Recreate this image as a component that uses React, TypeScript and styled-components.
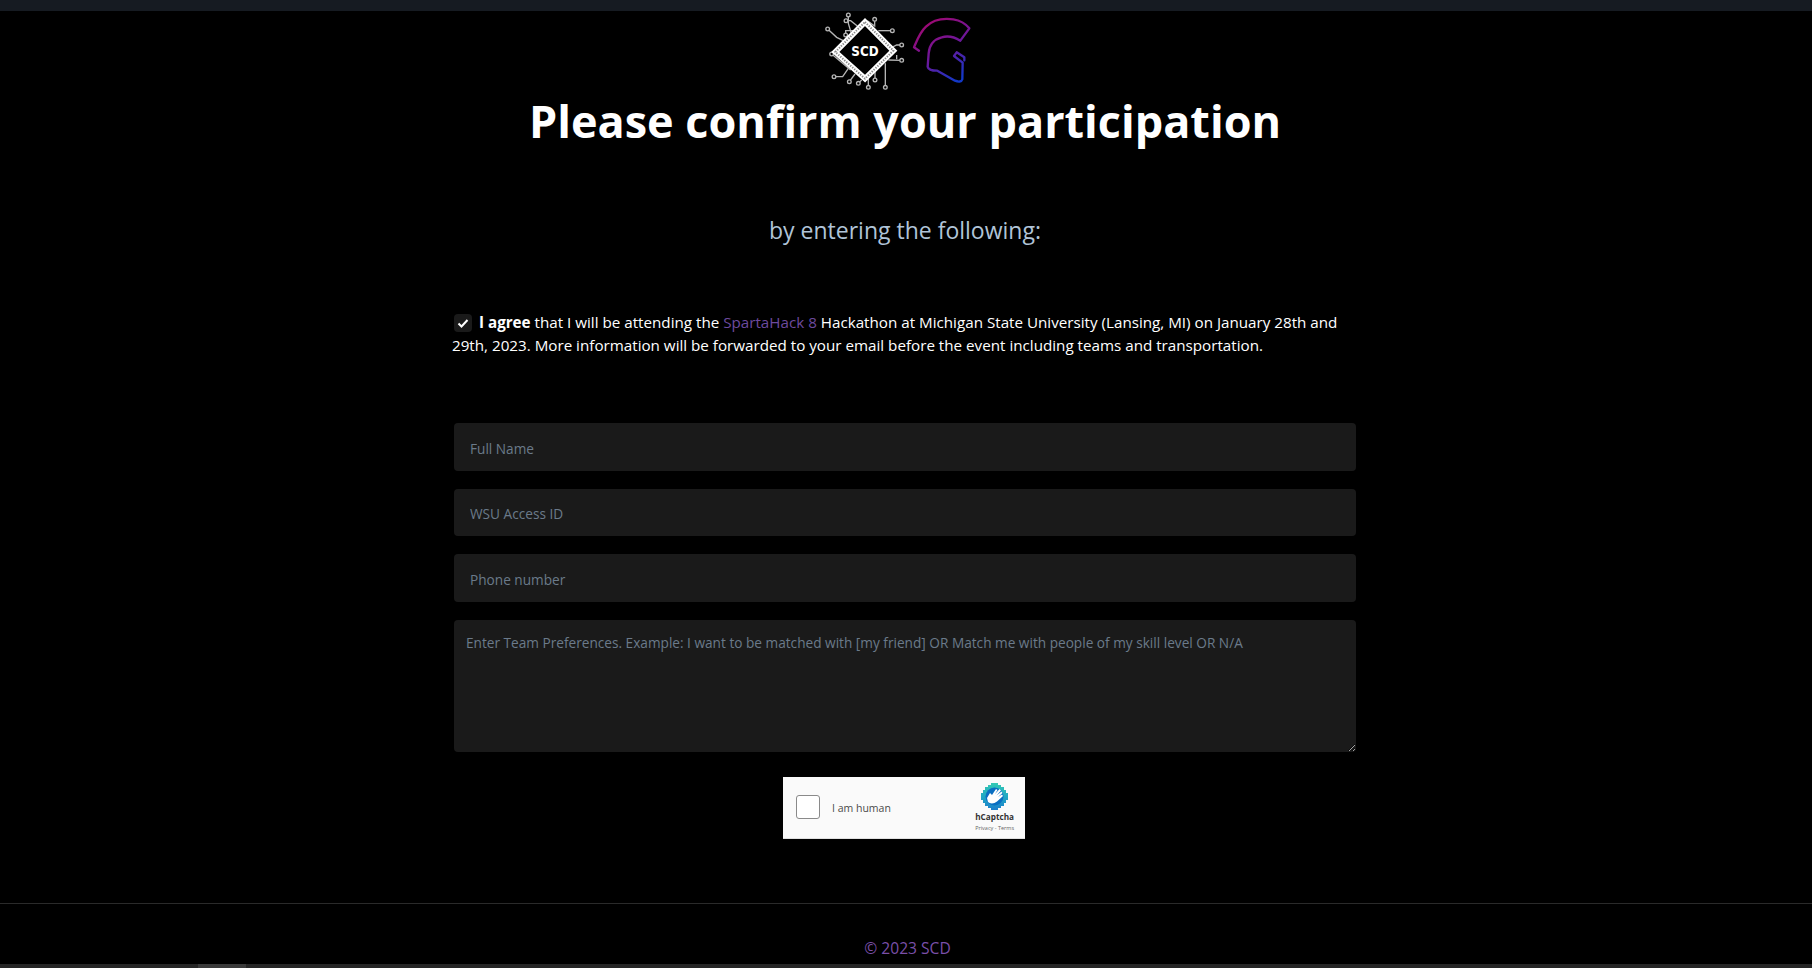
import React from 'react';
import styled, { createGlobalStyle } from 'styled-components';

const GlobalStyle = createGlobalStyle`
  html, body {
    margin: 0;
    padding: 0;
    background: #000;
    overflow: hidden;
  }
  * { box-sizing: border-box; }
`;

const Page = styled.div`
  height: 968px;
  display: flex;
  flex-flow: column;
  background: #000;
  color: #fff;
  font-family: "Open Sans", "Noto Sans", "Liberation Sans", sans-serif;
`;

const TopBar = styled.div`
  height: 11px;
  flex: none;
  background: #161b22;
`;

const Main = styled.main`
  flex: 1;
  padding-right: 2px;
  display: flex;
  flex-flow: column;
  align-items: center;
`;

const LogoRow = styled.div`
  height: 80px;
  margin-left: 2px;
  display: flex;
  justify-content: center;
`;

const Title = styled.h1`
  margin: 0;
  font-size: 45px;
  line-height: 60px;
  font-weight: 700;
  text-align: center;
`;

const Subtitle = styled.h2`
  margin: 63px 0 0;
  font-size: 23px;
  line-height: 32px;
  font-weight: 400;
  color: #b0c4d8;
  text-align: center;
`;

const Agreement = styled.p`
  width: 906px;
  margin: 65px 0 0;
  font-size: 15.2px;
  line-height: 23px;
`;

const AgreeBox = styled.span`
  display: inline-flex;
  align-items: center;
  justify-content: center;
  width: 18px;
  height: 18px;
  margin: 0 7px 0 2px;
  vertical-align: -1px;
  border-radius: 4px;
  background: #1a1a1a;
`;

const Highlight = styled.span`
  color: #6d4a9e;
`;

const Form = styled.form`
  width: 902px;
  margin-top: 66px;
  display: flex;
  flex-flow: column;
  gap: 18px;
`;

const Input = styled.input`
  height: 47.6px;
  padding: 3px 16px 0;
  border: none;
  border-radius: 4px;
  outline: none;
  background: #1a1a1a;
  color: #fff;
  font: 400 13.65px "Open Sans", "Noto Sans", sans-serif;

  &::placeholder {
    color: #6b7a8a;
    opacity: 1;
  }
`;

const TextArea = styled.textarea`
  height: 132px;
  padding: 13px 12px;
  border: none;
  border-radius: 4px;
  outline: none;
  resize: vertical;
  background: #1a1a1a;
  color: #fff;
  font: 400 13.65px "Open Sans", "Noto Sans", sans-serif;

  &::placeholder {
    color: #6b7a8a;
    opacity: 1;
  }
`;

const Captcha = styled.div`
  width: 242px;
  height: 62px;
  margin: 25px 2px 0 0;
  padding: 0 11px 0 13px;
  display: flex;
  align-items: center;
  background: #fafafa;
  border-bottom: 1px solid #e0e0e0;
`;

const CaptchaCheck = styled.div`
  width: 24px;
  height: 24px;
  flex: none;
  background: #fff;
  border: 1px solid #8a8a8a;
  border-radius: 3px;
`;

const CaptchaLabel = styled.span`
  margin: 1px 0 0 12px;
  flex: 1;
  color: #4a4a4a;
  font-size: 10.5px;
`;

const CaptchaBrand = styled.div`
  display: flex;
  flex-flow: column;
  align-items: center;
`;

const BrandName = styled.span`
  margin-top: 1px;
  color: #333;
  font-size: 8.2px;
  line-height: 11px;
  font-weight: 700;
`;

const BrandLinks = styled.span`
  margin-top: 2px;
  color: #666;
  font-size: 5.5px;
  line-height: 8px;
`;

const Footer = styled.footer`
  height: 61px;
  flex: none;
  padding: 33px 0 0 3px;
  border-top: 1px solid #2a2a2a;
  color: #7a4fa8;
  font-size: 15.6px;
  line-height: 22px;
  text-align: center;
`;

const ScrollTrack = styled.div`
  height: 4px;
  flex: none;
  background: #262626;
`;

const ScrollThumb = styled.div`
  width: 48px;
  height: 100%;
  margin-left: 198px;
  background: #3a3a3a;
`;

const CIRCUIT = [
  'M214 100 L205 70 L205 46',
  'M232 78 L212 62 L198 62',
  'M226 92 L197 92 L197 105',
  'M196 125 L170 112 L143 87',
  'M262 62 L284 78 L284 58',
  'M295 92 L337 92',
  'M330 145 L350 135 L365 135',
  'M325 180 L365 181',
  'M350 165 L350 178',
  'M316 190 L316 262',
  'M285 215 L285 240',
  'M265 235 L265 262',
  'M245 240 L235 250',
  'M225 222 L208 245',
  'M205 205 L188 230 L162 230',
  'M155 162 L212 210',
];

const PADS: [number, number][] = [
  [205, 45], [198, 62], [143, 87], [284, 58], [337, 92], [365, 135],
  [365, 181], [316, 262], [285, 240], [265, 262], [235, 250], [208, 245],
  [162, 230], [155, 162], [197, 105],
];

const Logos: React.FC = () => (
  <svg width="172" height="80" viewBox="120 33 516 240" fill="none">
    <defs>
      <linearGradient id="helmet" x1="0.2" y1="0" x2="0.75" y2="1">
        <stop offset="0" stopColor="#a3086f" />
        <stop offset="0.55" stopColor="#6a189c" />
        <stop offset="1" stopColor="#1238c8" />
      </linearGradient>
    </defs>
    <g stroke="#b5b5b5" strokeWidth="4">
      {CIRCUIT.map((d) => <path key={d} d={d} />)}
      {PADS.map(([cx, cy]) => <circle key={`${cx}-${cy}`} cx={cx} cy={cy} r="5.5" fill="#000" />)}
    </g>
    <path d="M255 66 L340 152 L255 236 L166 156 Z" fill="#000" stroke="#fff" strokeWidth="17" strokeLinejoin="miter" />
    <path d="M255 66 L340 152 L255 236 L166 156 Z" stroke="#8a8a8a" strokeWidth="6" strokeDasharray="4 4" />
    <text
      x="255"
      y="168"
      fill="#fff"
      fontFamily="'DejaVu Sans', sans-serif"
      fontWeight="700"
      fontSize="44"
      textAnchor="middle"
      textLength="82"
      lengthAdjust="spacingAndGlyphs"
    >
      SCD
    </text>
    <path
      d="M417 152 L402 142 C412 118 420 96 438 80 C458 60 490 54 520 58 C540 61 556 70 568 85 L541 122 C525 112 505 106 485 112 C462 118 448 135 446 160 L443 200 C445 210 460 212 472 212 L525 242 C535 246 545 246 547 238 L548 188 L522 168 L530 157 L553 172 L553 181"
      stroke="url(#helmet)"
      strokeWidth="7"
      strokeLinejoin="round"
      strokeLinecap="round"
    />
  </svg>
);

const HCaptchaMark: React.FC = () => (
  <svg width="27" height="27" viewBox="0 0 27 27">
    <defs>
      <linearGradient id="hc" x1="0" y1="0" x2="0" y2="1">
        <stop offset="0" stopColor="#35c9b4" />
        <stop offset="0.5" stopColor="#1fa8c4" />
        <stop offset="1" stopColor="#1e7fcc" />
      </linearGradient>
    </defs>
    <path
      fill="url(#hc)"
      d="M10 0h7v2h3v2h3v3h2v3h2v7h-2v3h-2v3h-3v2h-3v2h-7v-2h-3v-2h-3v-3h-2v-3h-2v-7h2v-3h2v-3h3v-2h3z"
    />
    <circle cx="13.5" cy="13.5" r="9" fill="#0a6fc2" />
    <path
      fill="#fff"
      d="M6 15 L9 10 L11 12 L15 6 L16.5 7 L14 11 L18.5 6 L20 7.5 L15.5 12.5 L20.5 8.5 L21.5 10 L17 14 L21 11.5 L22 13 L16 18.5 C13 21 9 21 7 19 Z"
    />
  </svg>
);

const App: React.FC = () => (
  <Page>
    <GlobalStyle />
    <TopBar />
    <Main>
      <LogoRow>
        <Logos />
      </LogoRow>
      <Title>Please confirm your participation</Title>
      <Subtitle>by entering the following:</Subtitle>
      <Agreement>
        <AgreeBox>
          <svg width="12" height="12" viewBox="0 0 12 12" fill="none">
            <path d="M1.5 6.5 L4.5 9.5 L10.5 3" stroke="#fff" strokeWidth="2" />
          </svg>
        </AgreeBox>
        <strong>I agree</strong>
        {' '}
        that I will be attending the
        {' '}
        <Highlight>SpartaHack 8</Highlight>
        {' '}
        Hackathon at Michigan State University (Lansing, MI) on January 28th and 29th, 2023.
        More information will be forwarded to your email before the event including teams and transportation.
      </Agreement>
      <Form>
        <Input type="text" placeholder="Full Name" />
        <Input type="text" placeholder="WSU Access ID" />
        <Input type="text" placeholder="Phone number" />
        <TextArea placeholder="Enter Team Preferences. Example: I want to be matched with [my friend] OR Match me with people of my skill level OR N/A" />
      </Form>
      <Captcha>
        <CaptchaCheck />
        <CaptchaLabel>I am human</CaptchaLabel>
        <CaptchaBrand>
          <HCaptchaMark />
          <BrandName>hCaptcha</BrandName>
          <BrandLinks>Privacy - Terms</BrandLinks>
        </CaptchaBrand>
      </Captcha>
    </Main>
    <Footer>© 2023 SCD</Footer>
    <ScrollTrack>
      <ScrollThumb />
    </ScrollTrack>
  </Page>
);

export default App;
